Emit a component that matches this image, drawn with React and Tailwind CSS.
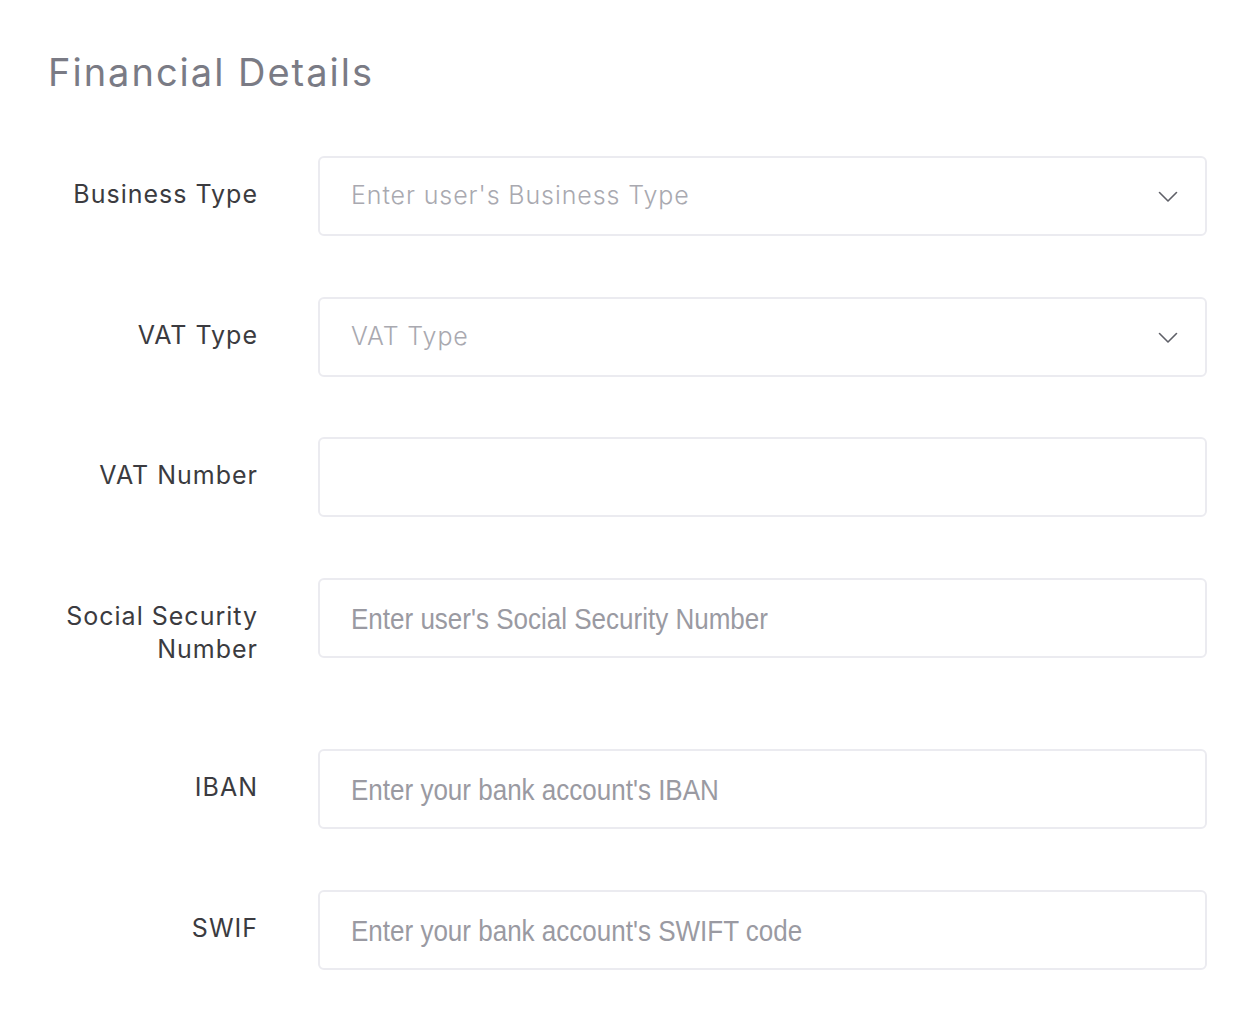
import React from "react";

const Chevron = () => (
  <svg width="20" height="12" viewBox="0 0 20 12" fill="none" className="shrink-0 mt-[2px]">
    <path d="M1.5 1.5 L10 10 L18.5 1.5" stroke="#5f6068" strokeWidth="1.6" strokeLinecap="round" strokeLinejoin="round" />
  </svg>
);

const Row = ({ label, children, mb = "mb-[61px]" }) => (
  <div className={`flex items-start ${mb}`}>
    <div className="w-[210px] shrink-0 text-right text-[25px] leading-[33px] text-[#3b3b40] font-['Inter',sans-serif] tracking-[1px] py-[22px] -mr-[1px]">
      {label}
    </div>
    <div className="ml-[61px] flex-1">{children}</div>
  </div>
);

const Box = ({ children }) => (
  <div className="h-[80px] w-[889px] rounded-[6px] border-2 border-[#ebebf0] bg-white flex items-center pl-[31px] pr-[27px]">
    {children}
  </div>
);

const ph = "inline-block whitespace-nowrap origin-left scale-x-[0.867] text-[30px] text-[#9a9aa2] font-['Liberation_Sans',Arial,sans-serif]";

export default function App() {
  return (
    <div className="min-h-[1018px] w-[1258px] bg-white pt-[48px] pl-[48px] font-['Inter',sans-serif]">
      <h1 className="text-[38px] leading-[48px] text-[#7a7b85] font-normal tracking-[2px] mb-[60px]">Financial Details</h1>
      <Row label="Business Type">
        <Box>
          <span className="flex-1 text-[25px] font-light text-[#a9a9b0] tracking-[0.9px]">Enter user's Business Type</span>
          <Chevron />
        </Box>
      </Row>
      <Row label="VAT Type" mb="mb-[60px]">
        <Box>
          <span className="flex-1 text-[25px] font-light text-[#a9a9b0] tracking-[0.9px]">VAT Type</span>
          <Chevron />
        </Box>
      </Row>
      <Row label="VAT Number">
        <Box />
      </Row>
      <Row label={<>Social Security<br />Number</>}>
        <Box>
          <span className={ph}>Enter user's Social Security Number</span>
        </Box>
      </Row>
      <Row label="IBAN">
        <Box>
          <span className={ph}>Enter your bank account's IBAN</span>
        </Box>
      </Row>
      <Row label="SWIF" mb="mb-0">
        <Box>
          <span className={ph}>Enter your bank account's SWIFT code</span>
        </Box>
      </Row>
    </div>
  );
}
